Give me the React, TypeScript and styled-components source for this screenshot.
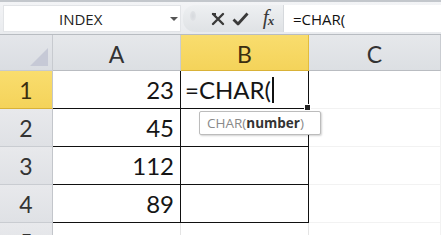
import React from "react";
import styled, { createGlobalStyle } from "styled-components";

const Global = createGlobalStyle`
  html, body { margin: 0; padding: 0; background: #ffffff; overflow: hidden; }
  #root { width: 441px; height: 235px; overflow: hidden; }
`;

const Page = styled.div`
  width: 441px;
  height: 235px;
  display: flex;
  flex-direction: column;
  background: #fff;
  overflow: hidden;
`;

const FormulaBar = styled.div`
  height: 35px;
  box-sizing: border-box;
  border-top: 2px solid #c3c7cc;
  border-bottom: 1px solid #b8bcc1;
  background: linear-gradient(#f3f4f6, #e9ebee);
  display: flex;
  align-items: stretch;
  padding: 3px 0 2px 3px;
  flex-shrink: 0;
`;

const NameBox = styled.div`
  width: 178px;
  box-sizing: border-box;
  background: #fff;
  border: 1px solid #e2e4e7;
  display: flex;
  align-items: center;
  position: relative;
  font-family: "Open Sans", sans-serif;
  font-size: 15px;
  color: #222;
`;

const NameText = styled.span`
  position: absolute;
  left: 55px;
  top: 3px;
`;

const DropArrow = styled.span`
  position: absolute;
  left: 166px;
  top: 11px;
  width: 0;
  height: 0;
  border-left: 4px solid transparent;
  border-right: 4px solid transparent;
  border-top: 4px solid #555;
`;

const Pill = styled.div`
  width: 100px;
  margin-left: 2px;
  box-sizing: border-box;
  border-radius: 12px 0 0 12px;
  background: linear-gradient(#eef0f2, #dfe2e5);
  display: flex;
  align-items: center;
  padding-left: 7px;
`;

const Grip = styled.span`
  width: 6px;
  height: 10px;
  border-radius: 50%;
  background: radial-gradient(#d6d9dd, #e4e6e9);
  margin-right: 11px;
  margin-top: -6px;
`;

const IconSlot = styled.span<{ $shift?: number }>`
  width: 22px;
  margin-left: ${(p) => p.$shift ?? 0}px;
  display: flex;
  justify-content: center;
  align-items: center;
`;

const Fx = styled.span`
  font-family: "Liberation Serif", serif;
  font-style: italic;
  font-size: 21px;
  color: #3a3a3a;
  letter-spacing: -1px;
  line-height: 1;
  margin-top: -2px;
  sub { font-size: 13px; vertical-align: -1px; font-weight: 700; }
`;

const FormulaInput = styled.div`
  flex: 1;
  background: #fff;
  border-left: 1px solid #d6d9dd;
  display: flex;
  align-items: center;
  padding-left: 9px;
  font-family: "Open Sans", sans-serif;
  font-size: 15px;
  color: #111;
`;

const Sheet = styled.div`
  flex: 1;
  display: grid;
  grid-template-columns: 53px 128px 128px 132px;
  grid-template-rows: 36px repeat(5, 38px);
`;

const Corner = styled.div`
  background: linear-gradient(#e4e6ea, #dadde2);
  border-right: 1px solid #c7cacf;
  border-bottom: 1px solid #c7cacf;
  box-sizing: border-box;
  position: relative;
  &::after {
    content: "";
    position: absolute;
    right: 4px;
    bottom: 4px;
    width: 0;
    height: 0;
    border-left: 18px solid transparent;
    border-bottom: 18px solid #c6c9d6;
  }
`;

const ColHead = styled.div<{ $active?: boolean }>`
  box-sizing: border-box;
  background: ${(p) =>
    p.$active
      ? "linear-gradient(#f9dd6e, #f4d35a)"
      : "linear-gradient(#e6e8eb, #dcdfe3)"};
  border-right: 1px solid ${(p) => (p.$active ? "#e2bd3c" : "#c9ccd1")};
  border-bottom: 1px solid ${(p) => (p.$active ? "#d9b237" : "#b9bcc1")};
  display: flex;
  align-items: center;
  justify-content: center;
  font-family: "Lato", sans-serif;
  font-size: 23px;
  color: ${(p) => (p.$active ? "#3a2e10" : "#333")};
  padding-top: 2px;
`;

const RowHead = styled.div<{ $active?: boolean }>`
  box-sizing: border-box;
  background: ${(p) =>
    p.$active
      ? "linear-gradient(#f9dd6e, #f4d35a)"
      : "linear-gradient(#e8e9ec, #dfe1e5)"};
  border-right: 1px solid #c3c6cb;
  border-bottom: 1px solid ${(p) => (p.$active ? "#d9b237" : "#c9ccd1")};
  display: flex;
  align-items: center;
  justify-content: center;
  font-family: "Lato", sans-serif;
  font-size: 23px;
  color: ${(p) => (p.$active ? "#3a2e10" : "#333")};
`;

const Cell = styled.div<{ $bordered?: boolean; $align?: "left" | "right"; $faint?: boolean }>`
  box-sizing: border-box;
  position: relative;
  background: #fff;
  border-right: 1px solid ${(p) => (p.$bordered ? "#111" : p.$faint ? "#f2f2f2" : "#e4e4e4")};
  border-bottom: 1px solid ${(p) => (p.$bordered ? "#111" : p.$faint ? "#f2f2f2" : "#e4e4e4")};
  display: flex;
  align-items: center;
  justify-content: ${(p) => (p.$align === "left" ? "flex-start" : "flex-end")};
  padding: 0 6px 0 4px;
  font-family: "Lato", sans-serif;
  font-size: 24px;
  color: #151515;
`;

const Caret = styled.span`
  display: inline-block;
  width: 2px;
  height: 26px;
  background: #111;
  margin-left: 1px;
`;

const FillHandle = styled.span`
  position: absolute;
  right: -3px;
  bottom: -3px;
  width: 5px;
  height: 5px;
  background: #222;
  border: 1px solid #fff;
  z-index: 2;
`;

const Tooltip = styled.div`
  position: absolute;
  left: 18px;
  top: 40px;
  width: 122px;
  height: 24px;
  box-sizing: border-box;
  background: #fff;
  border: 1px solid #bcbcbc;
  border-radius: 2px;
  box-shadow: 1px 1px 2px rgba(0, 0, 0, 0.18);
  display: flex;
  align-items: center;
  padding-left: 7px;
  font-family: "Open Sans", sans-serif;
  font-size: 13.5px;
  color: #8a8a8a;
  white-space: nowrap;
  z-index: 3;
  b { color: #333; font-weight: 700; }
`;

const XIcon = () => (
  <svg width="14" height="14" viewBox="0 0 14 14">
    <path d="M2 2 L12 12 M12 2 L2 12" stroke="#3a3a3a" strokeWidth="2.4" strokeLinecap="round" />
    <path d="M1 2 L5 2" stroke="#3a3a3a" strokeWidth="2" />
  </svg>
);

const CheckIcon = () => (
  <svg width="17" height="14" viewBox="0 0 17 14">
    <path d="M1.5 7.5 L6 12 L15.5 1.5" fill="none" stroke="#3a3a3a" strokeWidth="2.8" strokeLinejoin="round" />
  </svg>
);

const data: [number, string][] = [
  [1, "23"],
  [2, "45"],
  [3, "112"],
  [4, "89"],
];

export default function App() {
  return (
    <Page>
      <Global />
      <FormulaBar>
        <NameBox>
          <NameText>INDEX</NameText>
          <DropArrow />
        </NameBox>
        <Pill>
          <Grip />
          <IconSlot>
            <XIcon />
          </IconSlot>
          <IconSlot>
            <CheckIcon />
          </IconSlot>
          <IconSlot $shift={6}>
            <Fx>
              f<sub>x</sub>
            </Fx>
          </IconSlot>
        </Pill>
        <FormulaInput>=CHAR(</FormulaInput>
      </FormulaBar>
      <Sheet>
        <Corner />
        <ColHead>A</ColHead>
        <ColHead $active>B</ColHead>
        <ColHead>C</ColHead>
        {data.map(([r, v]) => (
          <React.Fragment key={r}>
            <RowHead $active={r === 1}>{r}</RowHead>
            <Cell $bordered>{v}</Cell>
            {r === 1 ? (
              <Cell $bordered $align="left">
                =CHAR(
                <Caret />
                <FillHandle />
                <Tooltip>
                  CHAR(<b>number</b>)
                </Tooltip>
              </Cell>
            ) : (
              <Cell $bordered />
            )}
            <Cell $faint />
          </React.Fragment>
        ))}
        <RowHead>5</RowHead>
        <Cell />
        <Cell />
        <Cell $faint />
      </Sheet>
    </Page>
  );
}
